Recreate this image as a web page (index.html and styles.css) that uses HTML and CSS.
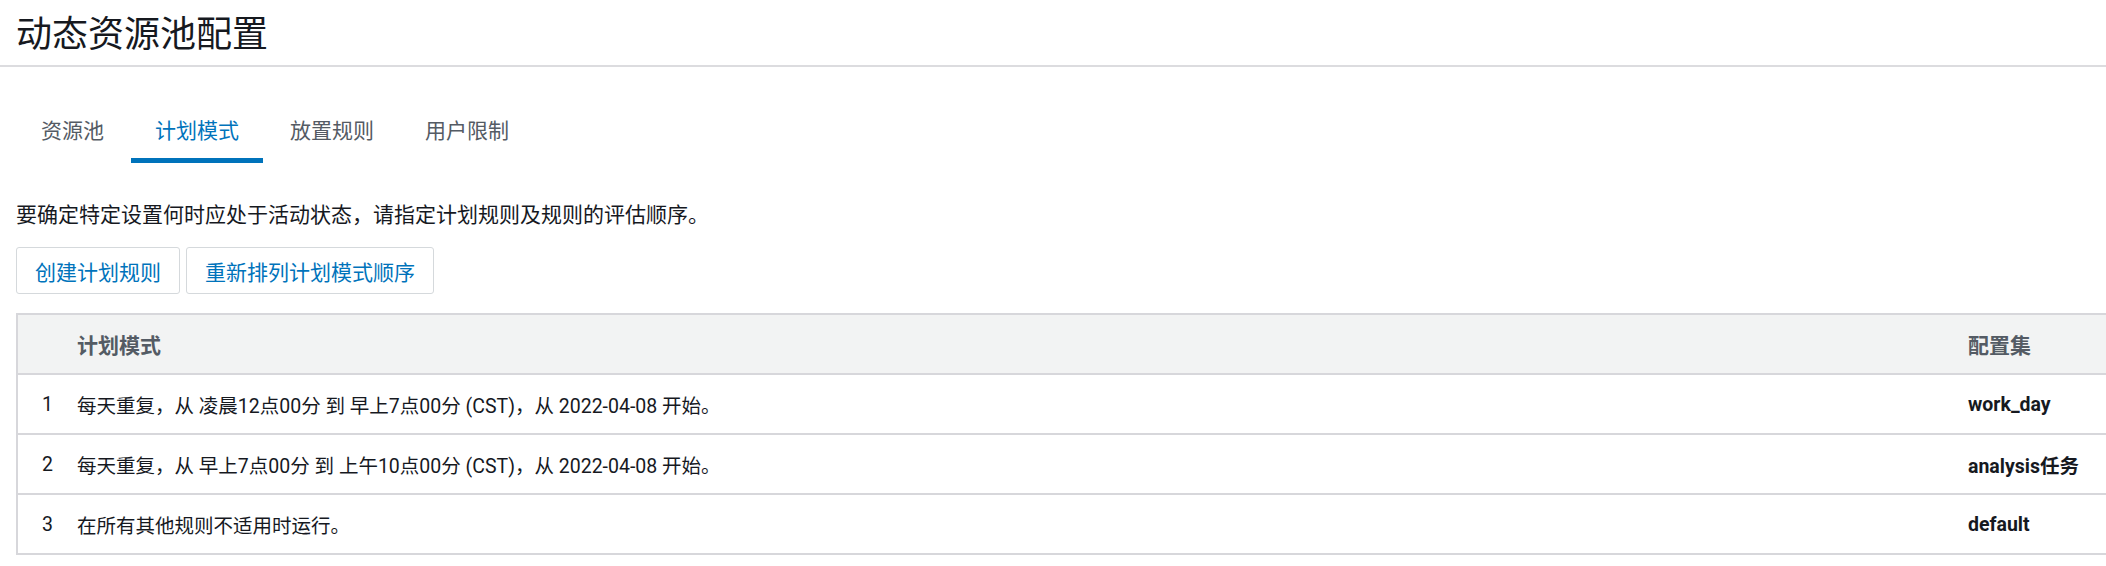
FILE: index.html
```html
<!DOCTYPE html>
<html lang="zh-CN">
<head>
<meta charset="utf-8">
<title>动态资源池配置</title>
<link rel="stylesheet" href="styles.css">
</head>
<body>
<header class="page-header">
  <h1 class="page-title">动态资源池配置</h1>
</header>
<main class="page">
  <nav class="tabs">
    <a class="tab">资源池</a>
    <a class="tab tab-active">计划模式</a>
    <a class="tab">放置规则</a>
    <a class="tab">用户限制</a>
  </nav>
  <p class="desc">要确定特定设置何时应处于活动状态，请指定计划规则及规则的评估顺序。</p>
  <div class="actions">
    <button class="btn">创建计划规则</button>
    <button class="btn">重新排列计划模式顺序</button>
  </div>
  <div class="table">
    <div class="row row-head">
      <div class="cell num"></div>
      <div class="cell">计划模式</div>
      <div class="cell">配置集</div>
    </div>
    <div class="row">
      <div class="cell num">1</div>
      <div class="cell">每天重复，从 凌晨12点00分 到 早上7点00分 (CST)，从 2022-04-08 开始。</div>
      <div class="cell set">work_day</div>
    </div>
    <div class="row">
      <div class="cell num">2</div>
      <div class="cell">每天重复，从 早上7点00分 到 上午10点00分 (CST)，从 2022-04-08 开始。</div>
      <div class="cell set">analysis任务</div>
    </div>
    <div class="row">
      <div class="cell num">3</div>
      <div class="cell">在所有其他规则不适用时运行。</div>
      <div class="cell set">default</div>
    </div>
  </div>
</main>
</body>
</html>
```

FILE: styles.css
```css
html, body {
  margin: 0;
  padding: 0;
  background: #ffffff;
  overflow: hidden;
}
body {
  font-family: Roboto, "Noto Sans CJK SC", sans-serif;
  color: #16191f;
}
.page-header {
  padding: 4px 16px 7px;
  border-bottom: 2px solid #dcdcdf;
}
.page-title {
  margin: 0;
  font-size: 36px;
  line-height: 54px;
  font-weight: 400;
  color: #16191f;
  font-family: "Noto Sans CJK SC", sans-serif;
}
.page {
  padding-left: 16px;
}
.tabs {
  display: flex;
  gap: 3px;
  margin-top: 47px;
}
.tab {
  font-size: 21px;
  line-height: 30px;
  padding: 0 24px 14px;
  color: #545b64;
  border-bottom: 5px solid transparent;
  font-family: "Noto Sans CJK SC", sans-serif;
}
.tab:first-child {
  padding-left: 25px;
}
.tab-active {
  color: #0073bb;
  border-bottom-color: #0073bb;
}
.desc {
  margin: 35px 0 0;
  font-size: 21px;
  line-height: 30px;
  font-family: "Noto Sans CJK SC", sans-serif;
  color: #16191f;
}
.actions {
  display: flex;
  gap: 6px;
  margin-top: 19px;
}
.btn {
  height: 47px;
  padding: 0 18px;
  border: 1px solid #d5d9dc;
  border-radius: 3px;
  background: #ffffff;
  color: #0073bb;
  font-size: 21px;
  font-family: "Noto Sans CJK SC", sans-serif;
  cursor: pointer;
}
.table {
  margin-top: 19px;
  width: calc(100% + 10px);
  box-sizing: border-box;
  border: 2px solid #d7d7db;
  border-bottom: none;
}
.row {
  display: grid;
  grid-template-columns: 59px 1fr 146px;
  height: 58px;
  align-items: center;
  border-bottom: 2px solid #d7d7db;
  font-size: 19.5px;
}
.row-head {
  background: #f2f3f3;
  font-size: 21px;
  font-weight: 700;
  color: #545b64;
}
.cell.num {
  text-align: center;
}
.cell.set {
  font-weight: 700;
  color: #16191f;
}
```
